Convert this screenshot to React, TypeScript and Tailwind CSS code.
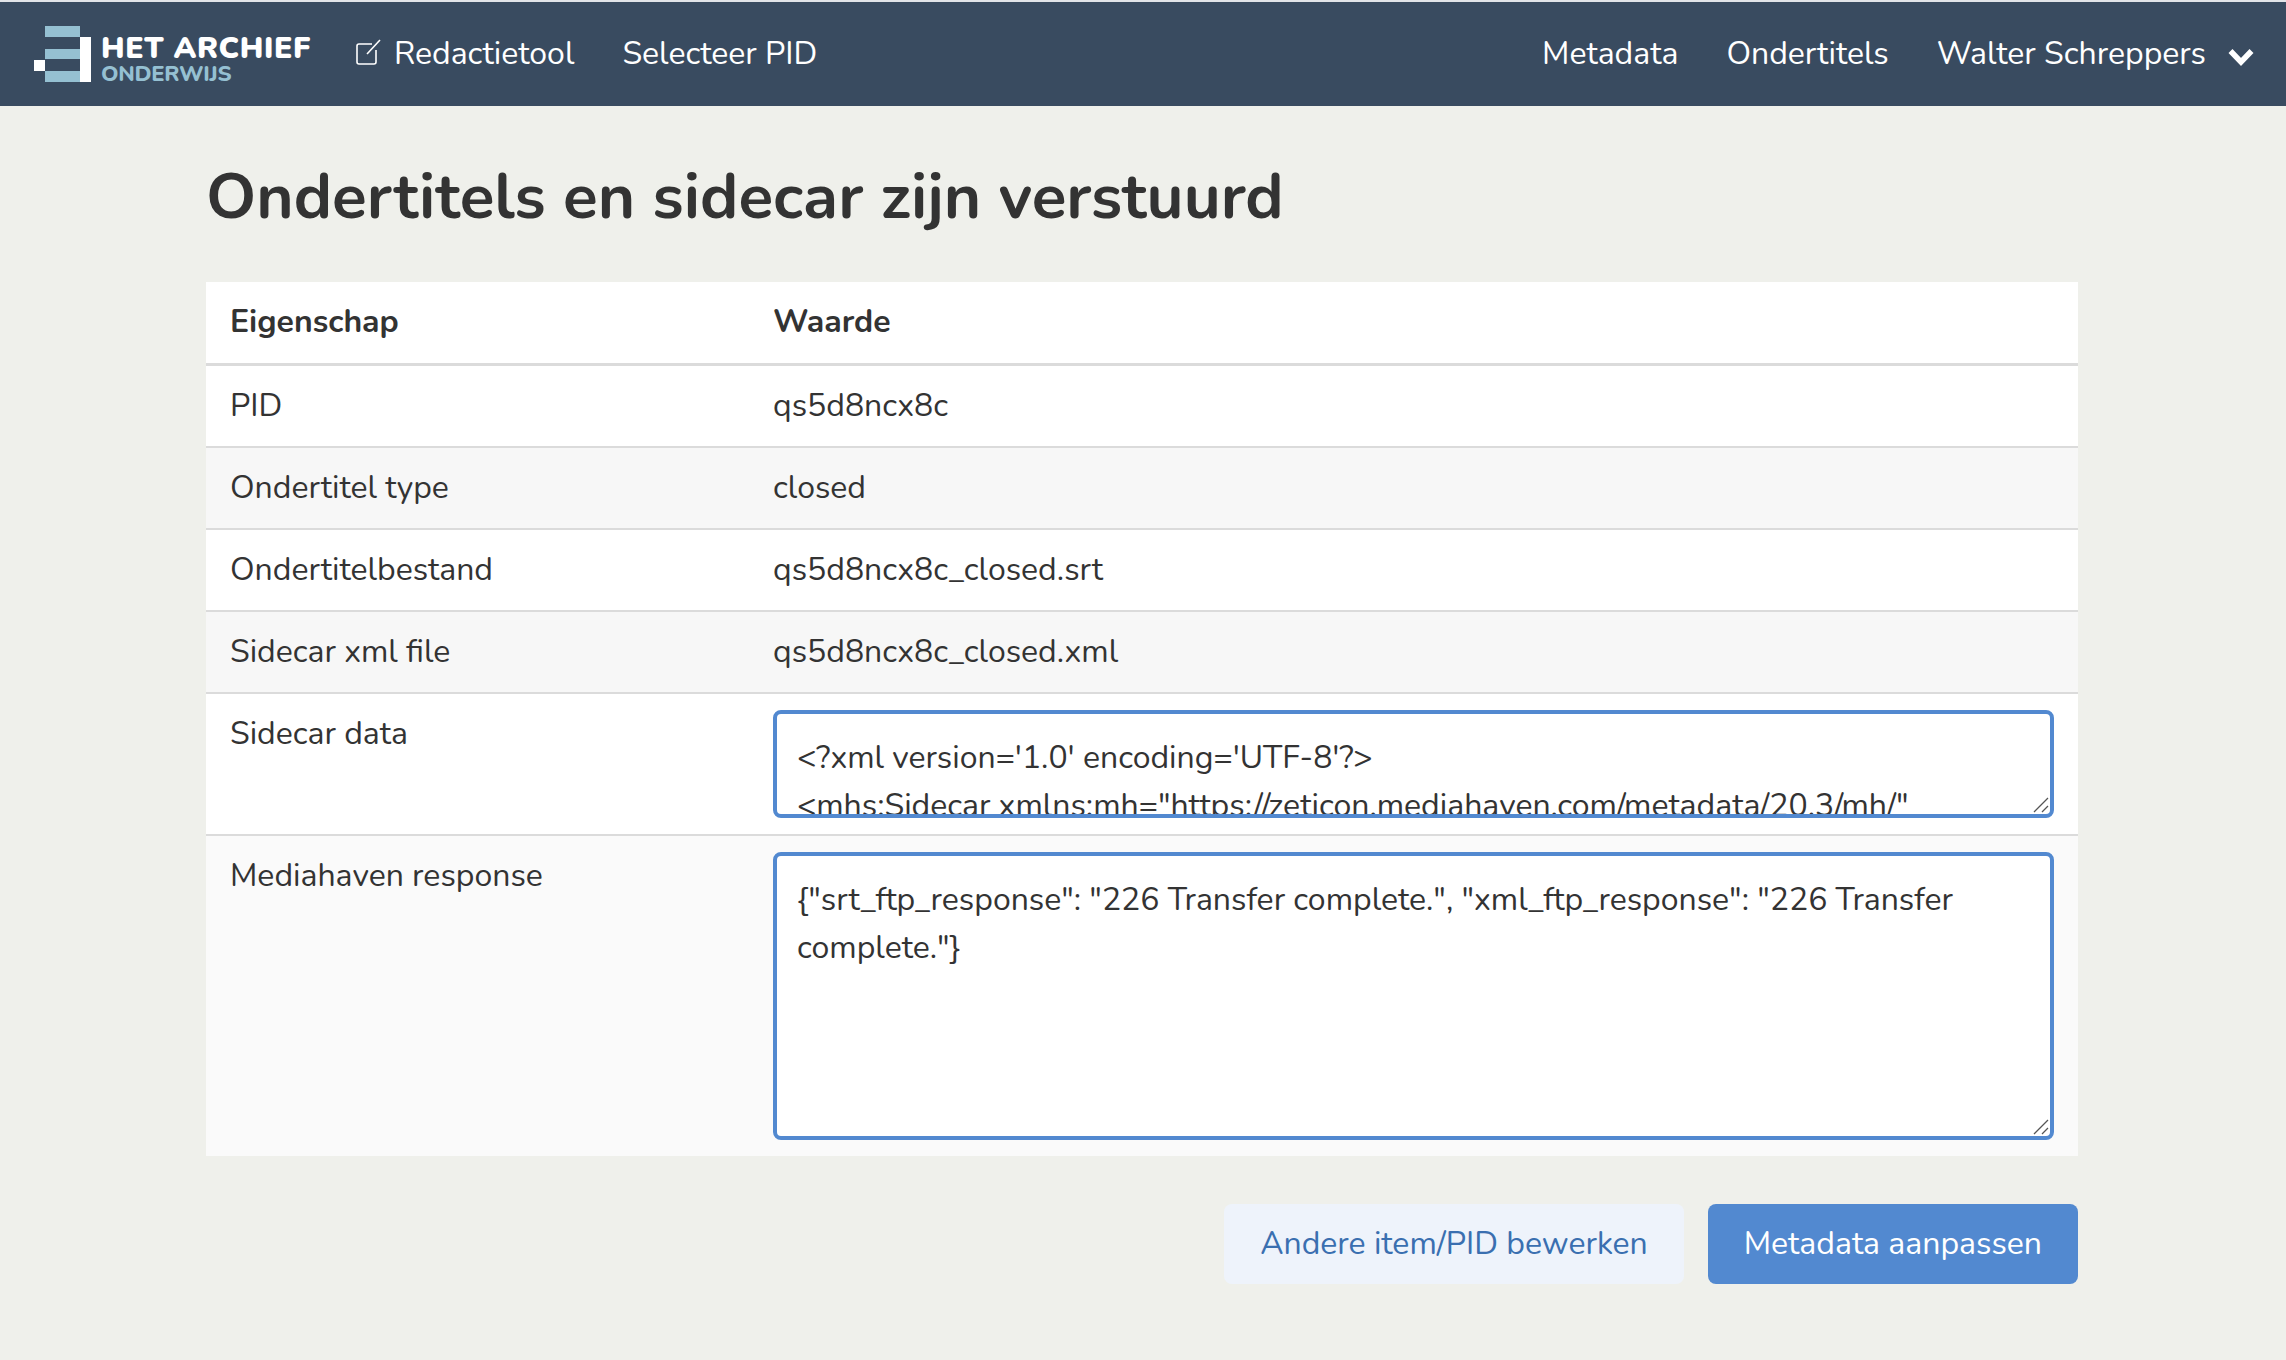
const rows = [
  { label: "PID", value: "qs5d8ncx8c" },
  { label: "Ondertitel type", value: "closed" },
  { label: "Ondertitelbestand", value: "qs5d8ncx8c_closed.srt" },
  { label: "Sidecar xml file", value: "qs5d8ncx8c_closed.xml" },
];

const sidecarXml = `<?xml version='1.0' encoding='UTF-8'?>
<mhs:Sidecar xmlns:mh="https://zeticon.mediahaven.com/metadata/20.3/mh/"
  xmlns:mhs="https://zeticon.mediahaven.com/metadata/20.3/mhs/" version="20.3">
  <mhs:Descriptive>
    <mh:Title>qs5d8ncx8c_closed</mh:Title>
  </mhs:Descriptive>
</mhs:Sidecar>`;

const mhResponse = `{"srt_ftp_response": "226 Transfer complete.", "xml_ftp_response": "226 Transfer complete."}`;

function Logo() {
  return (
    <div className="flex items-end">
      <svg width="57" height="56" viewBox="0 0 57 56" className="shrink-0">
        <rect x="11" y="0" width="35" height="11" fill="#95c0d2" />
        <rect x="46" y="11" width="11" height="45" fill="#ffffff" />
        <rect x="11" y="23" width="35" height="10" fill="#95c0d2" />
        <rect x="0" y="34" width="11" height="11" fill="#ffffff" />
        <rect x="11" y="45" width="35" height="11" fill="#95c0d2" />
      </svg>
      <div className="ml-[10px] flex flex-col">
        <span className="text-[30px] leading-[22px] font-black tracking-[0.6px] text-white">
          HET ARCHIEF
        </span>
        <span className="mt-[6px] text-[22px] leading-[16px] font-extrabold tracking-[-0.3px] text-[#95c0d2]">
          ONDERWIJS
        </span>
      </div>
    </div>
  );
}

function EditIcon() {
  return (
    <svg width="26" height="26" viewBox="0 0 26 26" fill="none" stroke="#ffffff" strokeWidth="1.6" className="mb-[5px] mr-[12px]">
      <path d="M16 5H3a2 2 0 0 0-2 2v16a2 2 0 0 0 2 2h15a2 2 0 0 0 2-2V11" />
      <path d="M11 15 24 1" />
    </svg>
  );
}

function Chevron() {
  return (
    <svg width="26" height="18" viewBox="0 0 26 18" fill="none" stroke="#ffffff" strokeWidth="5.5" className="ml-[22px] mt-[6px]">
      <path d="M2.5 3 13 14 23.5 3" />
    </svg>
  );
}

function ResizableBox({ value, height }: { value: string; height: string }) {
  return (
    <div className="relative">
      <textarea
        readOnly
        defaultValue={value}
        className={`block ${height} w-full resize-none overflow-hidden rounded-[8px] border-4 border-[#5289d0] bg-white px-[20px] pb-[19px] pt-[20px] outline-none`}
      />
      {/* grip of the textarea */}
      <svg width="16" height="16" viewBox="0 0 16 16" stroke="#555555" strokeWidth="1.3" className="absolute bottom-[5px] right-[5px]">
        <path d="M1 15 15 1M9 15l6-6" />
      </svg>
    </div>
  );
}

export default function App() {
  return (
    <div className="min-h-[1360px] bg-[#eff0eb] font-['Nunito','Lato',sans-serif] text-[32px] leading-[48px] text-[#333333]">
      <div className="h-[2px] bg-[#e2e4e8]" />
      <nav className="flex h-[104px] items-center justify-between bg-[#394b60] pl-[34px] pr-[32px] text-white">
        <div className="flex items-center">
          <Logo />
          <a className="ml-[45px] flex items-center">
            <EditIcon />
            Redactietool
          </a>
          <a className="ml-[48px]">Selecteer PID</a>
        </div>
        <div className="flex items-center">
          <a>Metadata</a>
          <a className="ml-[48px]">Ondertitels</a>
          <a className="ml-[48px]">Walter Schreppers</a>
          <Chevron />
        </div>
      </nav>

      <main className="ml-[206px] w-[1872px]">
        <h1 className="pb-[47px] pt-[53px] text-[64px] leading-[76px] font-bold">
          Ondertitels en sidecar zijn verstuurd
        </h1>

        <table className="w-full table-fixed border-collapse bg-white">
          <thead>
            <tr className="border-b-[3px] border-[#dbdbdb]">
              <th className="w-[567px] px-[24px] pb-[17px] pt-[16px] text-left font-bold">Eigenschap</th>
              <th className="pb-[17px] pr-[24px] pt-[16px] text-left font-bold">Waarde</th>
            </tr>
          </thead>
          <tbody>
            {rows.map((row, i) => (
              <tr key={row.label} className={`border-b-2 border-[#dbdbdb] ${i % 2 === 1 ? "bg-[#f7f7f7]" : "bg-white"}`}>
                <td className="px-[24px] py-[16px]">{row.label}</td>
                <td className="py-[16px] pr-[24px]">{row.value}</td>
              </tr>
            ))}
            <tr className="border-b-2 border-[#dbdbdb] bg-white">
              <td className="px-[24px] py-[16px] align-top">Sidecar data</td>
              <td className="py-[16px] pr-[24px]">
                <ResizableBox value={sidecarXml} height="h-[108px]" />
              </td>
            </tr>
            <tr className="bg-[#fafafa]">
              <td className="px-[24px] py-[16px] align-top">Mediahaven response</td>
              <td className="py-[16px] pr-[24px]">
                <ResizableBox value={mhResponse} height="h-[288px]" />
              </td>
            </tr>
          </tbody>
        </table>

        <div className="mt-[48px] flex justify-end gap-[24px]">
          <button className="h-[80px] rounded-[8px] bg-[#eef3fb] px-[36px] text-[#3a6fb0]">
            Andere item/PID bewerken
          </button>
          <button className="h-[80px] rounded-[8px] bg-[#5289d0] px-[36px] text-white">
            Metadata aanpassen
          </button>
        </div>
      </main>
    </div>
  );
}
